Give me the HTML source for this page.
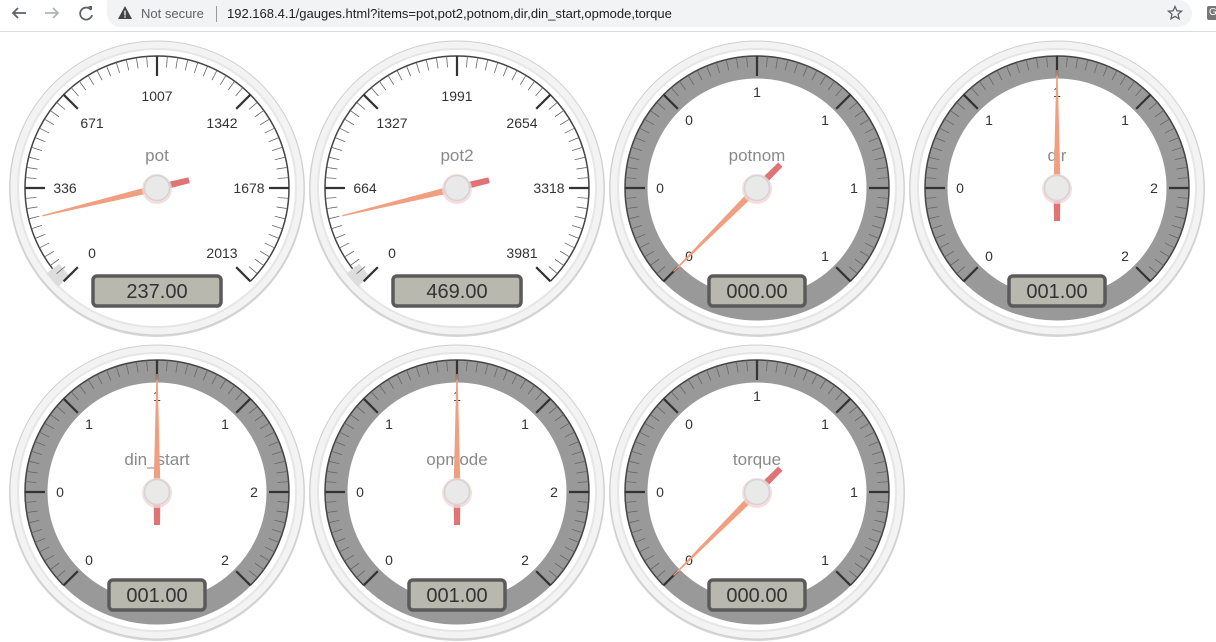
<!DOCTYPE html>
<html><head><meta charset="utf-8"><style>
body{margin:0;width:1216px;height:628px;overflow:hidden;background:#fff;font-family:"Liberation Sans",sans-serif;position:relative}
#bar{position:absolute;left:0;top:0;width:1216px;height:31px;border-bottom:1px solid #dadce0;background:#fff}
#pill{position:absolute;left:107px;top:0;width:1085px;height:27px;background:#f1f3f4;border-radius:0 14px 14px 14px}
.t{position:absolute;top:6px;font-size:13px;white-space:nowrap}
svg.g{position:absolute}
</style></head><body>
<div id="bar">
<svg width="110" height="30" style="position:absolute;left:0;top:0">
<path d="M26 13H13M18 8l-5 5 5 5" stroke="#5f6368" stroke-width="1.8" fill="none"/>
<path d="M45 13h13M53 8l5 5-5 5" stroke="#b0b3b6" stroke-width="1.8" fill="none"/>
<path d="M91 10a6 6 0 1 0 1 5" stroke="#5f6368" stroke-width="1.8" fill="none"/><path d="M88 6l4 0 0 4z" fill="#5f6368"/>
</svg>
<div id="pill"></div>
<svg width="16" height="16" style="position:absolute;left:117px;top:5px"><path d="M8 1L15 14H1z" fill="#444"/><rect x="7.3" y="5.5" width="1.4" height="5" fill="#f1f3f4"/><rect x="7.3" y="11.3" width="1.4" height="1.4" fill="#f1f3f4"/></svg>
<div class="t" style="left:141px;color:#5f6368">Not secure</div>
<div style="position:absolute;left:216px;top:6px;width:1px;height:16px;background:#999"></div>
<div class="t" style="left:227px;color:#202124">192.168.4.1/gauges.html?items=pot,pot2,potnom,dir,din_start,opmode,torque</div>
<svg width="16" height="16" style="position:absolute;left:1167px;top:5px"><path d="M8 1.5l1.9 4.3 4.6.4-3.5 3 1.1 4.6L8 11.4l-4.1 2.4 1.1-4.6-3.5-3 4.6-.4z" fill="none" stroke="#5f6368" stroke-width="1.3"/></svg>
<div style="position:absolute;left:1207px;top:6px;width:12px;height:14px;background:#777;border-radius:2px;color:#fff;font-size:10px;line-height:14px;padding-left:2px">G</div>
</div>

<svg class="g" id="g1" style="left:7px;top:38px" width="300" height="300"><text x="150" y="123" class="tt">pot</text><g class="lb"><text x="85" y="220">0</text><text x="58" y="155">336</text><text x="85" y="90">671</text><text x="150" y="63">1007</text><text x="215" y="90">1342</text><text x="242" y="155">1678</text><text x="215" y="220">2013</text></g><text x="150" y="260" class="vv">237.00</text></svg>
<svg class="g" id="g2" style="left:307px;top:38px" width="300" height="300"><text x="150" y="123" class="tt">pot2</text><g class="lb"><text x="85" y="220">0</text><text x="58" y="155">664</text><text x="85" y="90">1327</text><text x="150" y="63">1991</text><text x="215" y="90">2654</text><text x="242" y="155">3318</text><text x="215" y="220">3981</text></g><text x="150" y="260" class="vv">469.00</text></svg>
<svg class="g" id="g3" style="left:607px;top:38px" width="300" height="300"><text x="150" y="123" class="tt">potnom</text><g class="lb"><text x="82" y="223">0</text><text x="53" y="155">0</text><text x="82" y="87">0</text><text x="150" y="59">1</text><text x="218" y="87">1</text><text x="247" y="155">1</text><text x="218" y="223">1</text></g><text x="150" y="260" class="vv">000.00</text></svg>
<svg class="g" id="g4" style="left:907px;top:38px" width="300" height="300"><text x="150" y="123" class="tt">dir</text><g class="lb"><text x="82" y="223">0</text><text x="53" y="155">0</text><text x="82" y="87">1</text><text x="150" y="59">1</text><text x="218" y="87">1</text><text x="247" y="155">2</text><text x="218" y="223">2</text></g><text x="150" y="260" class="vv">001.00</text></svg>
<svg class="g" id="g5" style="left:7px;top:342px" width="300" height="300"><text x="150" y="123" class="tt">din_start</text><g class="lb"><text x="82" y="223">0</text><text x="53" y="155">0</text><text x="82" y="87">1</text><text x="150" y="59">1</text><text x="218" y="87">1</text><text x="247" y="155">2</text><text x="218" y="223">2</text></g><text x="150" y="260" class="vv">001.00</text></svg>
<svg class="g" id="g6" style="left:307px;top:342px" width="300" height="300"><text x="150" y="123" class="tt">opmode</text><g class="lb"><text x="82" y="223">0</text><text x="53" y="155">0</text><text x="82" y="87">1</text><text x="150" y="59">1</text><text x="218" y="87">1</text><text x="247" y="155">2</text><text x="218" y="223">2</text></g><text x="150" y="260" class="vv">001.00</text></svg>
<svg class="g" id="g7" style="left:607px;top:342px" width="300" height="300"><text x="150" y="123" class="tt">torque</text><g class="lb"><text x="82" y="223">0</text><text x="53" y="155">0</text><text x="82" y="87">0</text><text x="150" y="59">1</text><text x="218" y="87">1</text><text x="247" y="155">1</text><text x="218" y="223">1</text></g><text x="150" y="260" class="vv">000.00</text></svg>

<script>
var NS="http://www.w3.org/2000/svg";
function el(p,n,a,before){var e=document.createElementNS(NS,n);for(var k in a)e.setAttribute(k,a[k]);if(before)p.insertBefore(e,before);else p.appendChild(e);return e;}
var cfg=[["g1",0,-103.6],["g2",0,-103.6],["g3",1,-135],["g4",1,0],["g5",1,0],["g6",1,0],["g7",1,-135]];
cfg.forEach(function(c){
 var s=document.getElementById(c[0]),band=c[1],ang=c[2],cx=150,cy=150;
 var firstText=s.firstChild;
 var bg=document.createElementNS(NS,"g");s.insertBefore(bg,firstText);
 el(bg,"circle",{cx:cx,cy:cy+1,r:148,fill:"#d6d6d6"});
 el(bg,"circle",{cx:cx,cy:cy,r:147,fill:"#f3f3f3",stroke:"#cfcfcf","stroke-width":1});
 el(bg,"circle",{cx:cx,cy:cy,r:140,fill:"#e6e6e6"});
 el(bg,"circle",{cx:cx,cy:cy,r:138,fill:"#fff"});
 if(band){el(bg,"circle",{cx:cx,cy:cy,r:121,fill:"none",stroke:"#999","stroke-width":23});}
 var R=132;
 var a0=-135*Math.PI/180,a1=135*Math.PI/180;
 el(bg,"path",{d:"M"+(cx+R*Math.sin(a0))+" "+(cy-R*Math.cos(a0))+" A"+R+" "+R+" 0 1 1 "+(cx+R*Math.sin(a1))+" "+(cy-R*Math.cos(a1)),fill:"none",stroke:"#444","stroke-width":1.5});
 if(!band){
  el(bg,"path",{d:"M"+(cx-R*0.707)+" "+(cy+R*0.707)+" A"+R+" "+R+" 0 0 1 "+(cx-R*0.79)+" "+(cy+R*0.61),fill:"none",stroke:"#ddd","stroke-width":16});
 }
 for(var i=0;i<=60;i++){
  var t=(-135+i*4.5)*Math.PI/180,maj=i%10==0,L=maj?20:11;
  el(bg,"line",{x1:cx+R*Math.sin(t),y1:cy-R*Math.cos(t),x2:cx+(R-L)*Math.sin(t),y2:cy-(R-L)*Math.cos(t),stroke:maj?"#333":"#666","stroke-width":maj?2.2:0.8});
 }
 var w=band?96:128;
 el(bg,"rect",{x:cx-w/2,y:238,width:w,height:30,rx:4,fill:"#b8b8ae",stroke:"#5a5a5a","stroke-width":3.5});
 var g=el(s,"g",{transform:"rotate("+ang+" "+cx+" "+cy+")"});
 el(g,"polygon",{points:(cx-0.6)+","+(cy-118)+" "+(cx+0.6)+","+(cy-118)+" "+(cx+3.5)+","+cy+" "+(cx-3.5)+","+cy,fill:"#f0a080"});
 el(g,"polygon",{points:(cx-3.5)+","+cy+" "+(cx+3.5)+","+cy+" "+(cx+3)+","+(cy+33)+" "+(cx-3)+","+(cy+33),fill:"#e07474"});
 el(s,"circle",{cx:cx,cy:cy+1,r:15,fill:"#f2d6d6",opacity:.8});
 el(s,"circle",{cx:cx,cy:cy,r:12.5,fill:"#e9e9e9",stroke:"#d4d4d4","stroke-width":1.5});
});
</script>
<style>
.tt{font-size:17px;fill:#8a8a8a;text-anchor:middle;font-family:"Liberation Sans",sans-serif}
.lb text{font-size:14px;fill:#333;text-anchor:middle;font-family:"Liberation Sans",sans-serif}
.vv{font-size:20px;fill:#333;text-anchor:middle;font-family:"Liberation Sans",sans-serif}
</style>
</body></html>
